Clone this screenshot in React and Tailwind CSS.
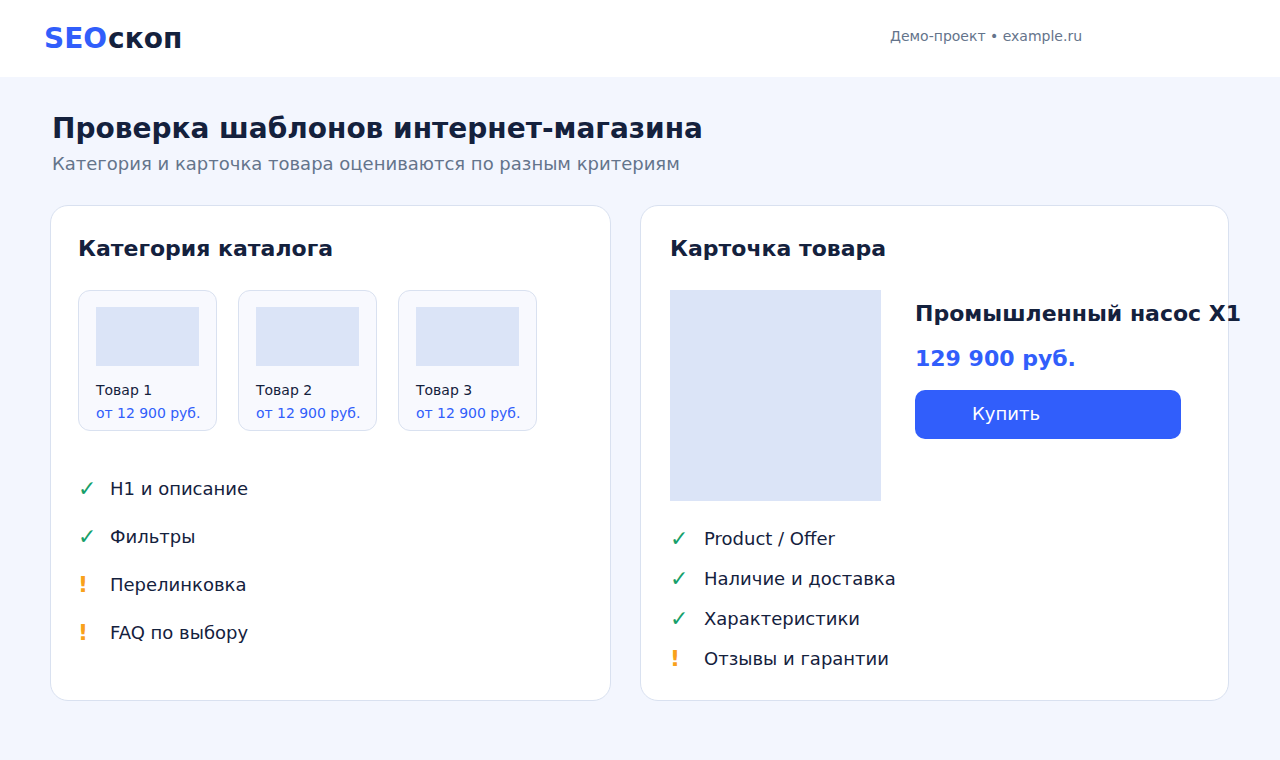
const products = [
  { name: "Товар 1", price: "от 12 900 руб." },
  { name: "Товар 2", price: "от 12 900 руб." },
  { name: "Товар 3", price: "от 12 900 руб." },
];

const categoryChecks = [
  { ok: true, label: "H1 и описание" },
  { ok: true, label: "Фильтры" },
  { ok: false, label: "Перелинковка" },
  { ok: false, label: "FAQ по выбору" },
];

const productChecks = [
  { ok: true, label: "Product / Offer" },
  { ok: true, label: "Наличие и доставка" },
  { ok: true, label: "Характеристики" },
  { ok: false, label: "Отзывы и гарантии" },
];

const CheckItem = ({ ok, label, className, iconClassName }) => (
  <li className={`flex items-center ${className}`}>
    <span
      className={`shrink-0 text-[22px] ${iconClassName} ${
        ok ? "text-[#16a06a]" : "font-bold text-[#f9a11b]"
      }`}
    >
      {ok ? "✓" : "!"}
    </span>
    <span className="text-[18px]">{label}</span>
  </li>
);

const ProductTile = ({ name, price }) => (
  <div className="h-[141px] w-[139px] rounded-xl border border-[#d9e1f0] bg-[#f8f9fe] px-[17px] pt-4 text-[14px] whitespace-nowrap">
    <div className="h-[59px] w-[103px] bg-[#dbe4f7]" />
    <div className="mt-[13px] leading-[23px]">{name}</div>
    <div className="leading-[23px] tracking-[-0.04px] text-[#315efb]">
      {price}
    </div>
  </div>
);

const App = () => {
  return (
    <div className="h-[760px] w-[1280px] overflow-hidden bg-[#f3f6fe] font-['DejaVu_Sans',sans-serif] text-[#14213d]">
      <header className="flex h-[77px] bg-white pl-11">
        <div className="flex w-[846px] gap-px pt-[19px] text-[28px] leading-[40px] font-bold">
          <span className="text-[#315efb]">SEO</span>
          <span>скоп</span>
        </div>
        <div className="pt-[26px] text-[14px] leading-5 text-[#64748b]">
          Демо-проект • example.ru
        </div>
      </header>

      <main className="pt-8 pl-[50px]">
        <h1 className="pl-0.5 text-[28px] leading-[40px] font-bold">
          Проверка шаблонов интернет-магазина
        </h1>
        <p className="mt-[3px] pl-0.5 text-[18px] leading-6 text-[#64748b]">
          Категория и карточка товара оцениваются по разным критериям
        </p>

        <div className="mt-[29px] flex gap-[29px]">
          <section className="h-[496px] w-[561px] rounded-[18px] border border-[#d9e1f0] bg-white pt-[27px] pl-[27px]">
            <h2 className="text-[22px] leading-8 font-bold">
              Категория каталога
            </h2>
            <div className="mt-[25px] flex gap-[21px]">
              {products.map((product) => (
                <ProductTile key={product.name} {...product} />
              ))}
            </div>
            <ul className="mt-[33px]">
              {categoryChecks.map((check) => (
                <CheckItem
                  key={check.label}
                  {...check}
                  className="h-12"
                  iconClassName="w-8"
                />
              ))}
            </ul>
          </section>

          <section className="h-[496px] w-[589px] rounded-[18px] border border-[#d9e1f0] bg-white pt-[27px] pl-[29px]">
            <h2 className="text-[22px] leading-8 font-bold">Карточка товара</h2>
            <div className="mt-[25px] flex gap-[34px]">
              <div className="size-[211px] shrink-0 bg-[#dbe4f7]" />
              <div className="pt-2 whitespace-nowrap">
                <h3 className="text-[22px] leading-8 font-bold">
                  Промышленный насос X1
                </h3>
                <div className="mt-[13px] text-[22px] leading-8 font-bold text-[#315efb]">
                  129 900 руб.
                </div>
                <button className="mt-[15px] block h-[49px] w-[266px] rounded-[10px] bg-[#315efb] pb-0.5 pl-[57px] text-left text-[18px] text-white">
                  Купить
                </button>
              </div>
            </div>
            <ul className="mt-[17px]">
              {productChecks.map((check) => (
                <CheckItem
                  key={check.label}
                  {...check}
                  className="h-10"
                  iconClassName="w-[34px]"
                />
              ))}
            </ul>
          </section>
        </div>
      </main>
    </div>
  );
};

export default App;
